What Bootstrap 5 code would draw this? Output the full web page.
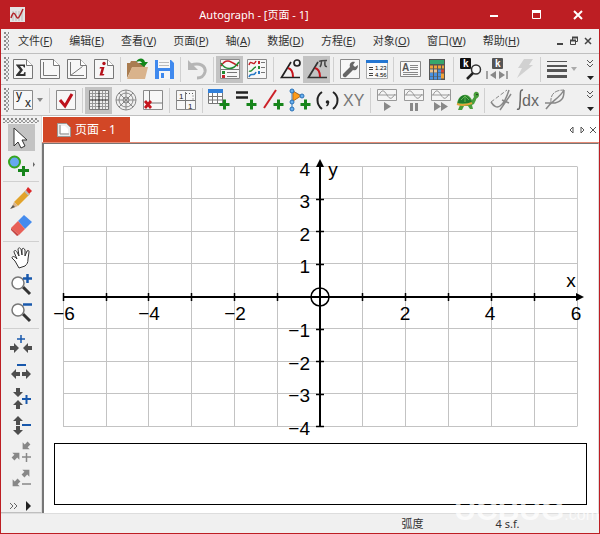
<!DOCTYPE html>
<html lang="zh-CN">
<head>
<meta charset="utf-8">
<meta name="viewport" content="width=device-width, initial-scale=1">
<title>Autograph - [页面 - 1]</title>
<link rel="stylesheet" href="https://cdn.jsdelivr.net/npm/bootstrap@5.3.0/dist/css/bootstrap.min.css">
<style>
:root{--brand:#bd1e23;--face:#f0f0f0;--rule:#bfbfbf}
body{font-family:"Noto Sans","Noto Sans CJK SC",sans-serif;font-size:11px;line-height:16px;color:#333;background:var(--face)}
button{border:0;background:none;padding:0;color:inherit;font:inherit}
svg{display:block}
svg text{font-family:"Liberation Sans",sans-serif}
.app{border:1px solid var(--brand);border-top:0}
.titlebar{background:var(--brand);height:29px;color:#fff}
.titlebar button{width:42px;height:29px}
.app-icon{padding-left:9px;width:34px}
.menubar{height:24px}
.menubar a{color:#333;text-decoration:none;margin-left:17px}
.menubar a:first-of-type{margin-left:9px}
.mdi button{width:14px}
.tools{min-height:31px;border-top:1px solid var(--rule);background:var(--face)}
.tool{width:27px;height:27px;flex:none;display:flex;align-items:center;justify-content:center}
.tool.active{background:#c3c3c3}
.grip{width:5px;height:24px;margin:0 0 0 3px;flex:none;background:radial-gradient(circle at 1px 1px,#8a8a8a 1px,transparent 1px) 0 0/4px 4px,radial-gradient(circle at 1px 1px,#a5a5a5 1px,transparent 1px) 2px 2px/4px 4px}
.menubar .grip{height:18px}
.grip.flat{width:auto;height:5px;margin:2px 2px 1px}
.split{width:6px;height:25px;flex:none;background:linear-gradient(#d0d0d0,#d0d0d0) center/1px 100% no-repeat}
.side .split{width:auto;height:6px;margin:0 2px;background:linear-gradient(#d0d0d0,#d0d0d0) center/100% 1px no-repeat}
.drop{width:10px}
.side{width:41px;background:var(--face);border-right:1px solid #ddd;border-bottom:1px solid var(--rule)}
.workspace{border-top:1px solid var(--rule)}
.tabs{height:27px;background:#fff;border-bottom:1px solid #e58a75;padding:1px 0 0 1px}
.page-tab{background:#d24726;color:#fff;width:87px;height:25px;font-size:12px}
.sheet{background:#fff;border-left:2px solid #777;border-top:1px solid #777;border-right:1px solid #ddd}
.results{border:1px solid #000;margin:3px 11px 8px 10px;min-height:62px}
.plot text{font-size:19px;fill:#000}
.status{height:20px;position:relative;border-top:1px solid #ddd}
.status .mode{width:72%}
.watermark{position:absolute;right:0;bottom:2px;color:rgba(255,255,255,.75);font-family:"Liberation Sans",sans-serif;font-size:30px;line-height:32px;font-weight:700;pointer-events:none}
.watermark span{font-size:16px;font-weight:400}
</style>
<script src="https://cdn.jsdelivr.net/npm/bootstrap@5.3.0/dist/js/bootstrap.bundle.min.js"></script>
</head>
<body>
<svg width="0" height="0" class="position-absolute" aria-hidden="true">
<defs>
<g id="sheet"><path d="M2.500 2.500h13l6 6v13h-19z" fill="#f7f7f7" stroke="#777"/><path d="M15.500 2.500v6h6" fill="#fff" stroke="#777"/></g>
<g id="box"><path d="M2.500 2.500h19v19h-19z" fill="#f7f7f7" stroke="#8a8a8a"/></g>
<path id="plus" d="M16 11.500h3v3.500h3.500v3h-3.500v3.500h-3v-3.500h-3.500v-3h3.500z" fill="#17851b"/>
<g id="wave"><path d="M2.500 1.500h19v11h-19z" fill="#f5f5f5" stroke="#999"/><path d="M3 7h18M4 7c3-6 5-5 8 0s5 4 8-1" fill="none" stroke="#999"/></g>
<g id="lens"><path d="M14 14l7 7" stroke="#333" stroke-width="3"/><circle cx="9" cy="10" r="6" fill="#fff" stroke="#777" stroke-width="1.500"/></g>
<path id="arr" d="M0-2h4v-3l5 5-5 5v-3h-4z"/>
</defs>
</svg>
<div class="app d-flex flex-column min-vh-100">
<header class="titlebar d-flex align-items-center">
<div class="app-icon"><svg width="15" height="15" viewBox="0 0 15 15"><path d="M0 0h15v15h-15z" fill="#e4e4e4"/><path d="M3 4v10M6 4v10M9 4v10M12 4v10" stroke="#bbb"/><path d="M1 11c2-6 3-6 5-2s3 2 7-7" fill="none" stroke="#b3262b" stroke-width="1.500"/></svg></div>
<div class="flex-grow-1 text-center">Autograph - [页面 - 1]</div>
<button aria-label="最小化"><svg width="42" height="29"><path d="M17 16h8" stroke="#fff" stroke-width="2"/></svg></button><button aria-label="最大化"><svg width="42" height="29"><path d="M17.500 10.500h8v8h-8z" fill="none" stroke="#fff"/><path d="M17 11.500h9" stroke="#fff" stroke-width="3"/></svg></button><button aria-label="关闭"><svg width="42" height="29"><path d="M17 11l8 8m0-8l-8 8" stroke="#fff" stroke-width="2"/></svg></button>
</header>
<nav class="menubar d-flex align-items-center">
<i class="grip"></i>
<a href="#">文件(<u>F</u>)</a><a href="#">编辑(<u>E</u>)</a><a href="#">查看(<u>V</u>)</a><a href="#">页面(<u>P</u>)</a><a href="#">轴(<u>A</u>)</a><a href="#">数据(<u>D</u>)</a><a href="#">方程(<u>E</u>)</a><a href="#">对象(<u>O</u>)</a><a href="#">窗口(<u>W</u>)</a><a href="#">帮助(<u>H</u>)</a>
<div class="mdi ms-auto d-flex pe-1"><button aria-label="最小化页面"><svg width="14" height="14"><path d="M4 10h6" stroke="#444" stroke-width="2"/></svg></button><button aria-label="还原页面"><svg width="14" height="14"><path d="M3.500 6.500h5v4h-5zM5.500 6v-2.500h5v4h-2" fill="none" stroke="#444"/><path d="M3 6.500h6M5 3.500h6" stroke="#444" stroke-width="2"/></svg></button><button aria-label="关闭页面"><svg width="14" height="14"><path d="M4 4l6 6m0-6l-6 6" stroke="#444" stroke-width="1.500"/></svg></button></div>
</nav>

<div class="tools d-flex align-items-center" role="toolbar" aria-label="标准">
<i class="grip"></i>
<button class="tool" aria-label="统计页"><svg width="24" height="24"><use href="#sheet"/><path d="M5 7.500h9v3h-1l-1-1.500h-3l3 4-3 4h3.500l1-2h1v4h-9.500v-1l4-5-4-5z" fill="#333"/></svg></button>
<button class="tool" aria-label="图形页"><svg width="24" height="24"><use href="#sheet"/><path d="M5.500 5v13.500h13.500" fill="none" stroke="#777"/></svg></button>
<button class="tool" aria-label="三维页"><svg width="24" height="24"><use href="#sheet"/><path d="M5.500 5v13.500h13.500M5.500 18.500l12-9" fill="none" stroke="#777"/></svg></button>
<button class="tool" aria-label="信息页"><svg width="24" height="24"><use href="#sheet"/><circle cx="12" cy="6.500" r="1.700" fill="#b5121b"/><path d="M8 10h4.500l-2 7h2l-1 1.500h-4l2-7h-2z" fill="#b5121b"/></svg></button>
<i class="split"></i>
<button class="tool" aria-label="打开"><svg width="24" height="24"><path d="M2 21V6h3l1-2h5l2 2h7v5H7z" fill="#a97c50"/><path d="M7 10h16l-3 12H2z" fill="#d9b38c"/><path d="M11 5c3-5 8-4 9 0h3l-4 5-5-4h3c-1-2-3-2-6-1z" fill="#13871b"/></svg></button>
<button class="tool" aria-label="保存"><svg width="24" height="24"><path d="M3 3h16l3 3v16H3z" fill="#3f89ee"/><path d="M6 3h12v8H6zM7 14h11v8H7z" fill="#f7f7f7"/><path d="M9 16h3v5H9z" fill="#3f89ee"/><path d="M7 5.500h10M7 8.500h10" stroke="#bbb"/></svg></button>
<i class="split"></i>
<button class="tool" aria-label="撤销" disabled><svg width="24" height="24"><path d="M6 8c9-3 15 1 14 7-1 4-4 6-8 6" fill="none" stroke="#b5b5b5" stroke-width="3"/><path d="M3 3v10h10z" fill="#b5b5b5"/></svg></button>
<i class="split"></i>
<button class="tool active" aria-label="图例"><svg width="24" height="24"><use href="#box"/><path d="M3 9c5-8 9-5 17 0" fill="none" stroke="#c5222a" stroke-width="1.500"/><path d="M3 6c4 7 12 8 18-1" fill="none" stroke="#228b32" stroke-width="1.500"/><path d="M3 12.500h18" stroke="#777"/><path d="M4 14h3v3H4z" fill="#228b32"/><path d="M4 18h3v3H4z" fill="#c5222a"/><path d="M9 15.500h10M9 19.500h10" stroke="#777"/></svg></button>
<button class="tool" aria-label="双视图"><svg width="24" height="24"><use href="#box"/><path d="M4 8c2-7 4 3 7-4" fill="none" stroke="#c5222a" stroke-width="1.500"/><path d="M4 14c3 2 4-4 7-4" fill="none" stroke="#228b32" stroke-width="1.500"/><path d="M4 20c2-6 5 1 7-5" fill="none" stroke="#2779c5" stroke-width="1.500"/><path d="M13 4h2v3h-2z" fill="#c5222a"/><path d="M13 9h2v3h-2z" fill="#228b32"/><path d="M13 14h2v3h-2z" fill="#2779c5"/><path d="M16 5.500h4M16 10.500h4M16 15.500h4" stroke="#777"/></svg></button>
<i class="split"></i>
<button class="tool" aria-label="角度"><svg width="24" height="24"><path d="M13 5L3.500 20.500H22" fill="none" stroke="#222" stroke-width="1.700"/><path d="M10 11c4 1 5 5 5 9" fill="none" stroke="#c5151d" stroke-width="2"/><circle cx="19" cy="6" r="3" fill="none" stroke="#222" stroke-width="1.700"/></svg></button>
<button class="tool active" aria-label="弧度"><svg width="24" height="24"><path d="M13 5L3.500 20.500H22" fill="none" stroke="#333" stroke-width="1.700"/><path d="M10 11c4 1 5 5 5 9" fill="none" stroke="#c5151d" stroke-width="2"/><path d="M14 4.500c1-1 2-1 8-1M16.500 4c0 3 0 4-1.500 6M20 4c-.500 4 0 6 2 5.500" fill="none" stroke="#444" stroke-width="1.500"/></svg></button>
<i class="split"></i>
<button class="tool" aria-label="设置"><svg width="24" height="24"><use href="#box"/><path d="M5 17l7-7c-1-3 1-6 5-5l-2 3 2 2 3-2c0 4-2 6-5 5l-7 7c-2 1-4-1-3-3z" fill="#666"/></svg></button>
<button class="tool" aria-label="数值"><svg width="24" height="24"><path d="M1.500 3.500h21v18h-21z" fill="#fafafa" stroke="#aaa"/><path d="M1 3h22v3H1z" fill="#2476d2"/><path d="M4 10.500h4M4 12.500h4M4 16.500h4M4 18.500h4" stroke="#444"/><text x="10" y="13" font-size="6">1.23</text><text x="10" y="20" font-size="6">4.56</text></svg></button>
<i class="split"></i>
<button class="tool" aria-label="文本框"><svg width="24" height="24"><path d="M2.500 4.500h20v15h-20z" fill="#f8f8f8" stroke="#888"/><text x="4" y="14" font-size="10" font-weight="bold" fill="#555">A</text><path d="M12 8.500h8M12 10.500h8M12 12.500h8M5 15.500h15M5 17.500h15" stroke="#888"/></svg></button>
<button class="tool" aria-label="计算器"><svg width="24" height="24"><path d="M4 2h16v21H4z" fill="#555"/><path d="M5 3h14v4H5z" fill="#35a66c"/><path d="M5 10h14" stroke="#f0a23a" stroke-width="3" stroke-dasharray="3 1"/><path d="M5 14h11M5 17.500h11M5 21h11" stroke="#4b91df" stroke-width="3" stroke-dasharray="3 1"/><path d="M16 14h3" stroke="#d64531" stroke-width="3"/><path d="M16 19h3" stroke="#f0a23a" stroke-width="5"/><path d="M5 14h7" stroke="#f0c28a" stroke-width="3" stroke-dasharray="3 1"/></svg></button>
<i class="split"></i>
<button class="tool" aria-label="查找常数"><svg width="24" height="24"><rect x="2" y="1" width="11" height="11" rx="1" fill="#111"/><text x="5" y="10" font-size="10" font-weight="bold" fill="#fff">k</text><circle cx="18" cy="12.500" r="4.500" fill="#f7f7f7" stroke="#333" stroke-width="1.500"/><path d="M15 16l-6 6" stroke="#222" stroke-width="2.500"/></svg></button>
<button class="tool" aria-label="步进常数"><svg width="24" height="24"><rect x="7" y="1" width="11" height="11" rx="1" fill="#555"/><text x="10" y="10" font-size="10" font-weight="bold" fill="#fff">k</text><path d="M2 14v8M22 14v8" stroke="#888" stroke-width="1.500"/><path d="M11 14v8l-6-4zM14 14v8l6-4z" fill="#888"/></svg></button>
<button class="tool" aria-label="快速" disabled><svg width="24" height="24"><path d="M12 2h9l-4 6h4L5 21l5-10H6z" fill="#d1d1d1"/></svg></button>
<i class="split"></i>
<button class="tool" aria-label="线宽"><svg width="24" height="24"><path d="M2 4.500h20" stroke="#555"/><path d="M2 9h20" stroke="#555" stroke-width="2"/><path d="M2 13.500h20M2 19.500h20" stroke="#555" stroke-width="3"/></svg></button>
<button class="drop" aria-label="线宽选项"><svg width="8" height="6"><path d="M1 1h6l-3 4z" fill="#aaa"/></svg></button>
<button class="ms-auto pe-1" aria-label="更多标准工具"><svg width="9" height="24"><path d="M1 3l3 3 3-3M1 7l3 3 3-3" fill="none" stroke="#555"/><path d="M1 19h7l-3.500 4z" fill="#222"/></svg></button>
</div>

<div class="tools d-flex align-items-center" role="toolbar" aria-label="图形">
<i class="grip"></i>
<button class="tool" aria-label="坐标轴"><svg width="24" height="24"><use href="#box"/><text x="5" y="11" font-size="12" fill="#222">y</text><text x="14" y="19" font-size="12" fill="#222">x</text></svg></button>
<button class="drop" aria-label="坐标轴选项"><svg width="8" height="6"><path d="M1 1h6l-3 4z" fill="#888"/></svg></button>
<i class="split"></i>
<button class="tool" aria-label="应用"><svg width="24" height="24"><use href="#box"/><path d="M6 12l5 6 7-12" fill="none" stroke="#bd111c" stroke-width="3"/></svg></button>
<i class="split"></i>
<button class="tool active" aria-label="直角网格"><svg width="24" height="24"><path d="M2.500 2.500h19v19h-19z" fill="#eee" stroke="#777"/><path d="M5.500 3v18M8.500 3v18M15.500 3v18M18.500 3v18M3 5.500h18M3 8.500h18M3 15.500h18M3 18.500h18" stroke="#999"/><path d="M12 3v18M3 12h18" stroke="#222"/></svg></button>
<button class="tool" aria-label="极坐标网格"><svg width="24" height="24" fill="none" stroke="#888"><circle cx="12" cy="12" r="10"/><circle cx="12" cy="12" r="7"/><circle cx="12" cy="12" r="3"/><path d="M12 2v20M2 12h20M5 5l14 14M19 5L5 19"/></svg></button>
<button class="tool" aria-label="隐藏轴"><svg width="24" height="24"><use href="#box"/><path d="M8.500 3v12h13" fill="none" stroke="#777"/><path d="M4 13l6 7m0-7l-6 7" stroke="#c5151d" stroke-width="2.700"/></svg></button>
<i class="split"></i>
<button class="tool" aria-label="等比例"><svg width="24" height="24"><use href="#box"/><path d="M11.500 4v17M3 12.500h18" stroke="#777"/><path d="M12 5.500h7v7" fill="none" stroke="#555" stroke-dasharray="1 2"/><text x="5" y="11" font-size="8" fill="#222">1</text><text x="14" y="21" font-size="8" fill="#222">1</text></svg></button>
<i class="split"></i>
<button class="tool" aria-label="添加数据集"><svg width="24" height="24"><path d="M1.500 1.500h14v14h-14z" fill="#fff" stroke="#777"/><path d="M1 1h15v4H1z" fill="#3180da"/><path d="M2 8.500h13M2 12h13M5.500 5v10M10.500 5v10" stroke="#777"/><use href="#plus"/></svg></button>
<button class="tool" aria-label="添加方程"><svg width="24" height="24"><path d="M2 4.500h12M2 9.500h12" stroke="#222" stroke-width="2.500"/><use href="#plus"/></svg></button>
<button class="tool" aria-label="添加直线"><svg width="24" height="24"><path d="M3 20L15 2" stroke="#cc2027" stroke-width="2"/><use href="#plus"/></svg></button>
<button class="tool" aria-label="添加形状"><svg width="24" height="24"><path d="M4 3v18M4 3l10 5" stroke="#3382ca"/><path d="M5 3l8 5-8 5z" fill="#ff9c19" stroke="#b66c20"/><g fill="#69aff0" stroke="#276fb4"><circle cx="4" cy="3" r="2"/><circle cx="14" cy="8" r="2"/><circle cx="4" cy="14" r="2"/><circle cx="4" cy="21" r="2"/></g><use href="#plus"/></svg></button>
<button class="tool" aria-label="添加坐标"><svg width="24" height="24"><path d="M7 4c-6 4-6 12 0 17M18 4c6 4 6 12 0 17" fill="none" stroke="#222" stroke-width="2"/><circle cx="12.500" cy="14" r="1.800" fill="#222"/><path d="M13.500 14c0 2-.500 3-2 4" fill="none" stroke="#222" stroke-width="1.500"/></svg></button>
<button class="tool" aria-label="XY 数据"><svg width="24" height="24"><text x="1" y="18" font-size="16" fill="#777">XY</text></svg></button>
<i class="split"></i>
<button class="tool" aria-label="播放"><svg width="24" height="24"><use href="#wave"/><path d="M9 14v9l7-4.500z" fill="#888"/></svg></button>
<button class="tool" aria-label="暂停"><svg width="24" height="24"><use href="#wave"/><path d="M9.500 15v8M14.500 15v8" stroke="#888" stroke-width="3"/></svg></button>
<button class="tool" aria-label="快进"><svg width="24" height="24"><use href="#wave"/><path d="M5 14v9l7-4.500zM12 14v9l7-4.500z" fill="#888"/></svg></button>
<button class="tool" aria-label="慢速"><svg width="24" height="24"><path d="M1 16C2 6 12 3 16 12l2-3c-2-6 5-7 5-2 0 3-3 3-3 5l-2 4-2 1 1 4h-3l-2-3H8l-2 4H2l2-5z" fill="#4a9f3c"/><path d="M2 15C3 5 13 5 16 15z" fill="#1f792c"/><path d="M5 12l4-4 4 4M9 8v6" fill="none" stroke="#67b84d"/><path d="M1 16c6 2 10 1 15-1" fill="none" stroke="#e2a33b" stroke-width="2"/><circle cx="21" cy="6.500" r=".700" fill="#111"/></svg></button>
<i class="split"></i>
<button class="tool" aria-label="切线"><svg width="24" height="24" fill="none" stroke="#888"><path d="M2 14L18 2" stroke-dasharray="4 2"/><path d="M2 14c6 10 13 4 18-12M11 22L22 6M13 12l7 3" stroke-width="1.500"/></svg></button>
<button class="tool" aria-label="积分"><svg width="24" height="24"><path d="M7 2c-4-1-2 6-3 13 0 6-1 7-3 6" fill="none" stroke="#666" stroke-width="1.500"/><text x="6" y="18" font-size="16" fill="#666">dx</text></svg></button>
<button class="tool" aria-label="面积"><svg width="24" height="24" fill="none" stroke="#888"><path d="M3 21C9 12 16 11 21 2M2 15h10c8-2 9-6 9-13" stroke-width="1.500"/><path d="M8 15C7 6 12 2 21 2" stroke-dasharray="5 1"/></svg></button>
<button class="ms-auto pe-1" aria-label="更多图形工具"><svg width="9" height="24"><path d="M1 3l3 3 3-3M1 7l3 3 3-3" fill="none" stroke="#555"/><path d="M1 19h7l-3.500 4z" fill="#222"/></svg></button>
</div>

<div class="workspace d-flex flex-grow-1">
<aside class="side d-flex flex-column flex-shrink-0" role="toolbar" aria-label="工具">
<i class="grip flat"></i>
<div class="d-flex flex-column align-items-center">
<button class="tool active" aria-label="选择"><svg width="24" height="24"><path d="M5 2v18l4-4 3 6 4-2-3-6h5z" fill="#fff" stroke="#333"/></svg></button>
<button class="tool" aria-label="添加点"><svg width="27" height="24"><circle cx="6.500" cy="9" r="5.500" fill="#66a8ef" stroke="#35a51e" stroke-width="2"/><path d="M14 13h3v3h4v3h-4v4h-3v-4h-4v-3h4z" fill="#17851b"/><path d="M25 9v5l2-2.500z" fill="#666"/></svg></button>
</div>
<i class="split"></i>
<div class="d-flex flex-column align-items-center">
<button class="tool" aria-label="铅笔"><svg width="24" height="24"><path d="M5 16L17 4l4 4L9 20z" fill="#e2a32b"/><path d="M5 16l4 4-7 3z" fill="#d7b38c"/><path d="M1 23l3-4 2 2z" fill="#555"/><path d="M17 4l2-3 4 4-3 3z" fill="#dc2929"/><path d="M16 5l4 4" stroke="#bbb" stroke-width="2"/></svg></button>
<button class="tool" aria-label="橡皮擦"><svg width="24" height="24"><path d="M9 8l6-6 8 7-7 7z" fill="#458bed"/><path d="M9 8l7 8-6 6-8-7z" fill="#e86058"/><path d="M2 15l8 7-2 1-6-6z" fill="#c54442"/></svg></button>
</div>
<i class="split"></i>
<div class="d-flex flex-column align-items-center">
<button class="tool" aria-label="平移"><svg width="24" height="24"><path d="M10 22l-4-7-3-3c0-2 2-2 4 0l1 1-3-7c0-2 2-2 3 0l2 4-1-7c1-2 2-1 3 0l1 6V3c1-1 2-1 3 1v6l2-5c2-1 2 0 2 1l-1 7c0 4-1 5-3 7z" fill="#fff" stroke="#333"/></svg></button>
<button class="tool" aria-label="放大"><svg width="24" height="24"><use href="#lens"/><path d="M14 5.500h9M18.500 1v9" stroke="#1858ac" stroke-width="2.500"/></svg></button>
<button class="tool" aria-label="缩小"><svg width="24" height="24"><use href="#lens"/><path d="M14 4.500h9" stroke="#1858ac" stroke-width="2.500"/></svg></button>
</div>
<i class="split"></i>
<div class="d-flex flex-column align-items-center">
<button class="tool" aria-label="水平放大"><svg width="24" height="24" fill="#4e4e4e"><use href="#arr" transform="translate(1 15)"/><use href="#arr" transform="translate(23 15) scale(-1 1)"/><path d="M8 6h8M12 2v8" stroke="#1858ac" stroke-width="1.500"/></svg></button>
<button class="tool" aria-label="水平缩小"><svg width="24" height="24" fill="#4e4e4e"><use href="#arr" transform="translate(13 14)"/><use href="#arr" transform="translate(11 14) scale(-1 1)"/><path d="M8 5h9" stroke="#1858ac" stroke-width="2"/></svg></button>
<button class="tool" aria-label="垂直放大"><svg width="24" height="24" fill="#4e4e4e"><use href="#arr" transform="translate(9 1) rotate(90)"/><use href="#arr" transform="translate(9 22) rotate(-90)"/><path d="M13 12h9M17.500 8v9" stroke="#1858ac" stroke-width="2"/></svg></button>
<button class="tool" aria-label="垂直缩小"><svg width="24" height="24" fill="#4e4e4e"><use href="#arr" transform="translate(9 12) rotate(90)"/><use href="#arr" transform="translate(9 11) rotate(-90)"/><path d="M13 11h9" stroke="#1858ac" stroke-width="2"/></svg></button>
<button class="tool" aria-label="整体放大" disabled><svg width="24" height="24" fill="#888"><use href="#arr" transform="translate(20 2) rotate(135)"/><use href="#arr" transform="translate(4 18) rotate(-45)"/><path d="M13 16h9M17.500 12v9" stroke="#888" stroke-width="1.500"/></svg></button>
<button class="tool" aria-label="整体缩小" disabled><svg width="24" height="24" fill="#888"><use href="#arr" transform="translate(14 8) rotate(-45)"/><use href="#arr" transform="translate(10 12) rotate(135)"/><path d="M13 16h9" stroke="#888" stroke-width="1.500"/></svg></button>
</div>
<div class="mt-auto d-flex justify-content-between px-2"><button aria-label="更多工具"><svg width="9" height="12"><path d="M1 3l3 3-3 3M5 3l3 3-3 3" fill="none" stroke="#666"/></svg></button><button aria-label="展开"><svg width="8" height="12"><path d="M1 1v10l5-5z" fill="#222"/></svg></button></div>
</aside>
<main class="flex-grow-1 d-flex flex-column">
<div class="tabs d-flex align-items-center">
<button class="page-tab d-flex align-items-center justify-content-center gap-1 align-self-start"><svg width="14" height="14"><path d="M.500.500h9l4 4v9h-13z" fill="#eee" stroke="#999"/><path d="M4 3v7h7V6l-3-3z" fill="#fff"/><path d="M3 2v9h9" fill="none" stroke="#888"/></svg><span>页面 - 1</span></button>
<div class="ms-auto d-flex"><button aria-label="上一页"><svg width="11" height="10"><path d="M7 2v6L4 5z" fill="none" stroke="#555"/></svg></button><button aria-label="下一页"><svg width="11" height="10"><path d="M4 2v6l3-3z" fill="none" stroke="#555"/></svg></button><button aria-label="关闭标签"><svg width="11" height="10"><path d="M2 2l6 6m0-6L2 8" stroke="#555"/></svg></button></div>
</div>
<section class="sheet flex-grow-1 d-flex flex-column">
<svg class="plot w-100" viewBox="44 144 554 296" role="img" aria-label="坐标平面">
<path d="M63.500 166.500V426.500M106.500 166.500V426.500M148.500 166.500V426.500M191.500 166.500V426.500M234.500 166.500V426.500M277.500 166.500V426.500M362.500 166.500V426.500M405.500 166.500V426.500M448.500 166.500V426.500M491.500 166.500V426.500M534.500 166.500V426.500M577.500 166.500V426.500M63 166.500H577M63 198.500H577M63 231.500H577M63 263.500H577M63 328.500H577M63 361.500H577M63 393.500H577M63 426.500H577" stroke="#c3c3c3" fill="none"/>
<path d="M63 297H578M320 166V427" stroke="#000" stroke-width="2"/>
<path d="M63.500 293v8M106.500 293v8M148.500 293v8M191.500 293v8M234.500 293v8M277.500 293v8M362.500 293v8M405.500 293v8M448.500 293v8M491.500 293v8M534.500 293v8M316 199.500h8M316 231.500h8M316 264.500h8M316 329.500h8M316 361.500h8M316 394.500h8M316 426.500h8" stroke="#000" stroke-width="1.500"/>
<path d="M576 293l8 4-8 4zM316 167l4-8 4 8z"/><circle cx="320" cy="297" r="9" fill="none" stroke="#000" stroke-width="1.500"/>
<g text-anchor="end"><text x="310" y="176">4</text><text x="310" y="208">3</text><text x="310" y="241">2</text><text x="310" y="273">1</text><text x="310" y="337">−1</text><text x="310" y="370">−2</text><text x="310" y="402">−3</text><text x="310" y="435">−4</text></g>
<g text-anchor="middle"><text x="64" y="320">−6</text><text x="149" y="320">−4</text><text x="235" y="320">−2</text><text x="405" y="320">2</text><text x="490" y="320">4</text><text x="576" y="320">6</text><text x="333" y="176">y</text><text x="571" y="287">x</text></g>
</svg>
<div class="results"></div>
</section>
</main>
</div>
<footer class="status d-flex align-items-center"><div class="mode text-end"><span class="pe-2">弧度</span></div><div class="ms-5 ps-3">4 s.f.</div><div class="watermark">UCBUG<span>.com</span></div></footer>
</div>
</body>
</html>
